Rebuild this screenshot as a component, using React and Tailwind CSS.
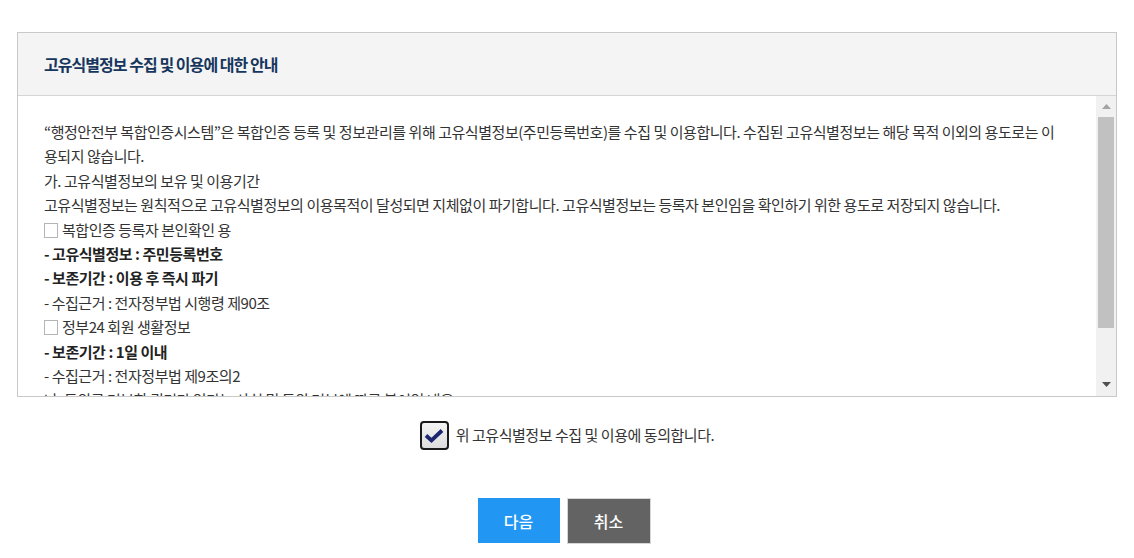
import { useState } from 'react'

const font = { fontFamily: '"Noto Sans CJK KR", "Noto Sans", sans-serif' }

function Box() {
  return <span className="inline-block w-[14px] h-[15px] border border-[#b5b5b5] mr-[4px] align-[-2px]" />
}

function App() {
  const [agree, setAgree] = useState(true)

  return (
    <div className="min-h-screen bg-white pt-8" style={font}>
      <div className="mx-[17px] border border-[#c9c9c9]">
        {/* 제목 */}
        <div className="h-[63px] bg-[#f4f4f4] border-b border-[#d5d5d5] flex items-center px-[26px]">
          <h2 className="text-[16px] font-bold text-[#17365d] tracking-[-0.06em]">
            고유식별정보 수집 및 이용에 대한 안내
          </h2>
        </div>

        {/* 내용 + 스크롤바 */}
        <div className="flex h-[300px]">
          <div className="flex-1 overflow-hidden pl-[26px] pr-[32px] pt-[24px] text-[15px] leading-[24.4px] text-[#333] tracking-[-0.03em]">
            <p>“행정안전부 복합인증시스템”은 복합인증 등록 및 정보관리를 위해 고유식별정보(주민등록번호)를 수집 및 이용합니다. 수집된 고유식별정보는 해당 목적 이외의 용도로는 이용되지 않습니다.</p>
            <p>가. 고유식별정보의 보유 및 이용기간</p>
            <p>고유식별정보는 원칙적으로 고유식별정보의 이용목적이 달성되면 지체없이 파기합니다. 고유식별정보는 등록자 본인임을 확인하기 위한 용도로 저장되지 않습니다.</p>
            <p><Box />복합인증 등록자 본인확인 용</p>
            <p className="font-bold text-[#222]">- 고유식별정보 : 주민등록번호</p>
            <p className="font-bold text-[#222]">- 보존기간 : 이용 후 즉시 파기</p>
            <p>- 수집근거 : 전자정부법 시행령 제90조</p>
            <p><Box />정부24 회원 생활정보</p>
            <p className="font-bold text-[#222]">- 보존기간 : 1일 이내</p>
            <p>- 수집근거 : 전자정부법 제9조의2</p>
            <p>나. 동의를 거부할 권리가 있다는 사실 및 동의 거부에 따른 불이익 내용</p>
            <p>정보주체는 고유식별정보 수집 및 이용에 대한 동의를 거부할 권리가 있습니다.</p>
          </div>
          <div className="w-[20px] bg-[#f1f1f1] flex flex-col items-center">
            <div className="h-[21px] flex items-center justify-center">
              <svg width="9" height="5" viewBox="0 0 9 5"><path d="M0 5 L4.5 0 L9 5 Z" fill="#a3a3a3" /></svg>
            </div>
            <div className="w-[16px] h-[211px] bg-[#c1c1c1]" />
            <div className="flex-1 flex items-end justify-center pb-[9px]">
              <svg width="9" height="5" viewBox="0 0 9 5"><path d="M0 0 L9 0 L4.5 5 Z" fill="#505050" /></svg>
            </div>
          </div>
        </div>
      </div>

      {/* 동의 체크 */}
      <div className="flex justify-center items-center gap-[7px] mt-[24px]">
        <button
          onClick={() => setAgree(!agree)}
          className="w-[29px] h-[29px] rounded-[4px] border-2 border-[#1a1a1a] bg-gradient-to-b from-[#f4f4f4] to-[#dcdcdc] flex items-center justify-center"
        >
          {agree && (
            <svg width="20" height="16" viewBox="0 0 20 16">
              <path d="M2 7.5 L7.5 12.5 L18 2.5" fill="none" stroke="#1c2670" strokeWidth="3.8" strokeLinejoin="miter" />
            </svg>
          )}
        </button>
        <span className="text-[15px] text-[#333] tracking-[-0.03em]">위 고유식별정보 수집 및 이용에 동의합니다.</span>
      </div>

      {/* 버튼 */}
      <div className="flex justify-center gap-[7px] mt-[48px] pr-[6px]">
        <button className="w-[82px] h-[45px] bg-[#2196f3] text-white text-[16px] font-medium">다음</button>
        <button className="w-[84px] h-[46px] bg-[#636363] border border-[#d6d6d6] text-white text-[16px] font-medium">취소</button>
      </div>
    </div>
  )
}

export default App
